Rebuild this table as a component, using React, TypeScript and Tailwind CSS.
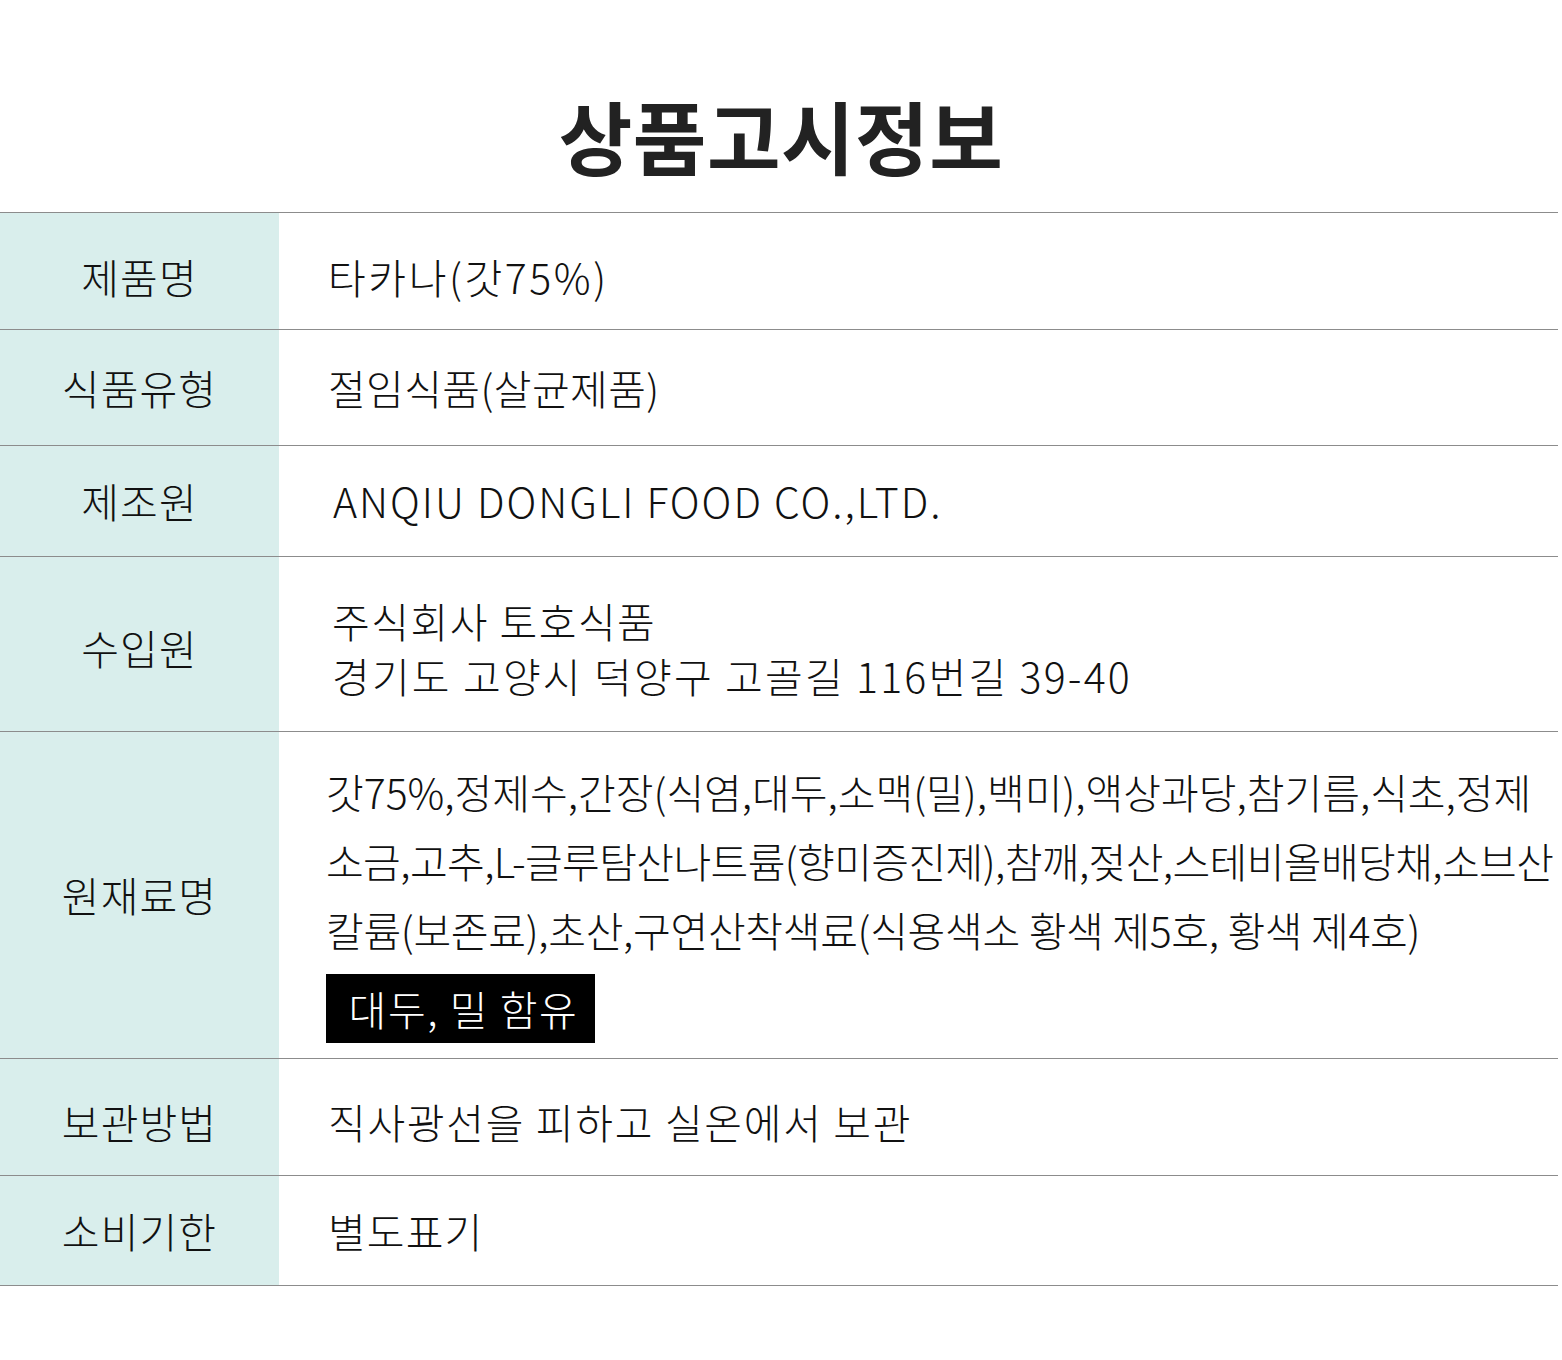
import React from "react";

const font = { fontFamily: '"Noto Sans CJK KR", "Noto Sans", sans-serif' };

function Row({ label, h, children, cls }: { label: string; h: string; children: React.ReactNode; cls?: string }) {
  return (
    <div className={`grid grid-cols-[279px_1fr] border-b border-[#8c8c8c] ${h}`}>
      <div className={`bg-[#d9eeec] flex items-center justify-center text-[41px] font-light text-[#111] tracking-[1.1px] ${cls ?? ""}`}>
        {label}
      </div>
      <div className={`flex flex-col justify-center pl-[49px] text-[41px] font-light text-[#111] ${cls ?? ""}`}>
        {children}
      </div>
    </div>
  );
}

export default function App() {
  return (
    <div className="w-[1562px] h-[1360px] bg-white" style={font}>
      <div className="h-[212px] flex items-center justify-center pt-[56px]">
        <h1 className="text-[80px] font-bold text-[#222] tracking-[0.5px] leading-none">상품고시정보</h1>
      </div>
      <div className="w-[1558px] border-t border-[#8c8c8c]">
        <Row label="제품명" h="h-[117px]" cls="pt-[12px]">
          <div className="tracking-[2.6px]">타카나(갓75%)</div>
        </Row>
        <Row label="식품유형" h="h-[116px]">
          <div className="tracking-[0.4px]">절임식품(살균제품)</div>
        </Row>
        <Row label="제조원" h="h-[111px]">
          <div className="ml-[5px] tracking-[2px]">ANQIU DONGLI FOOD CO.,LTD.</div>
        </Row>
        <Row label="수입원" h="h-[175px]" cls="pt-[8px]">
          <div className="ml-[4px] leading-[55px] tracking-[1.5px]">주식회사 토호식품</div>
          <div className="ml-[4px] leading-[55px] tracking-[2.2px]">경기도 고양시 덕양구 고골길 116번길 39-40</div>
        </Row>
        <div className="grid grid-cols-[279px_1fr] border-b border-[#8c8c8c] h-[327px]">
          <div className="bg-[#d9eeec] flex items-center justify-center text-[41px] font-light text-[#111] tracking-[1.1px]">
            원재료명
          </div>
          <div className="pl-[47px] pt-[25px] text-[41px] font-light text-[#111]">
            <div className="leading-[69px] whitespace-nowrap tracking-[0px]">갓75%,정제수,간장(식염,대두,소맥(밀),백미),액상과당,참기름,식초,정제</div>
            <div className="leading-[69px] whitespace-nowrap tracking-[-0.6px]">소금,고추,L-글루탐산나트륨(향미증진제),참깨,젖산,스테비올배당채,소브산</div>
            <div className="leading-[69px] whitespace-nowrap tracking-[-0.3px]">칼륨(보존료),초산,구연산착색료(식용색소 황색 제5호, 황색 제4호)</div>
            <div className="mt-[10px] inline-flex h-[69px] w-[269px] items-center justify-center bg-black text-white text-[41px] tracking-[1.6px] pl-[6px]">
              대두, 밀 함유
            </div>
          </div>
        </div>
        <Row label="보관방법" h="h-[117px]" cls="pt-[10px]">
          <div className="tracking-[1.7px]">직사광선을 피하고 실온에서 보관</div>
        </Row>
        <Row label="소비기한" h="h-[110px]">
          <div className="tracking-[1.1px]">별도표기</div>
        </Row>
      </div>
    </div>
  );
}
